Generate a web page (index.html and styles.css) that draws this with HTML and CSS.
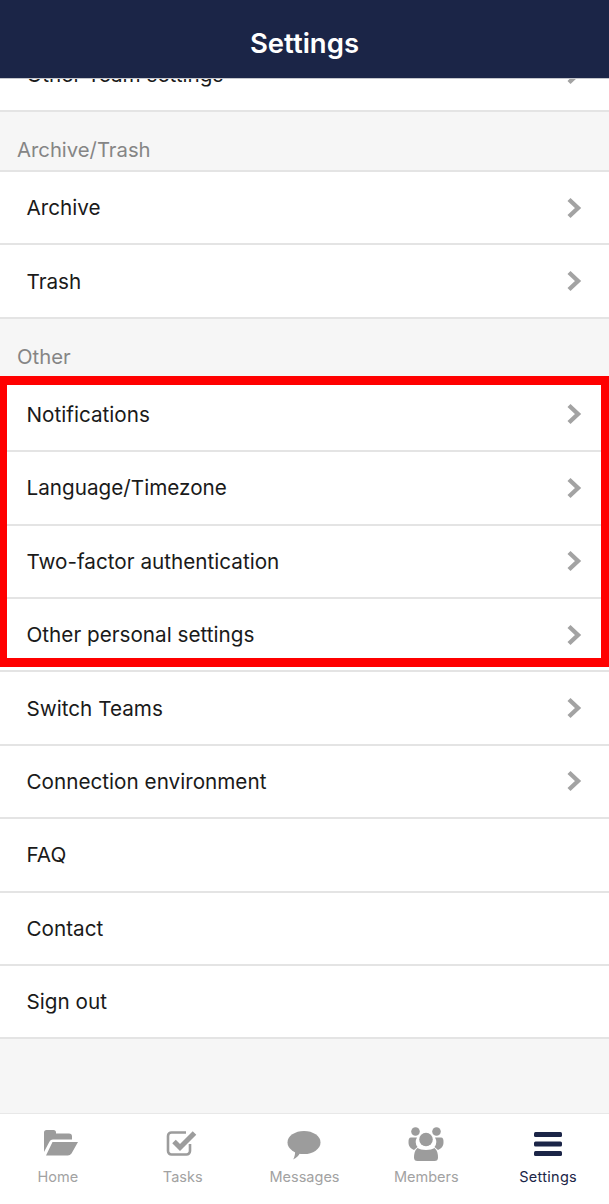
FILE: index.html
```html
<!DOCTYPE html>
<html lang="en">
<head>
  <meta charset="UTF-8" />
  <title>Settings</title>
  <link rel="stylesheet" href="styles.css">
</head>
<body>
  <div class="app">
    <header class="topbar">Settings</header>

    <main class="scroll">
      <div class="list list-cut">
        <div class="row"><span>Other Team settings</span><svg class="chev" viewBox="0 0 16 22"><path d="M3 2.5 L12 11 L3 19.5" /></svg></div>
      </div>

      <div class="group-title">Archive/Trash</div>
      <div class="list">
        <div class="row"><span>Archive</span><svg class="chev" viewBox="0 0 16 22"><path d="M3 2.5 L12 11 L3 19.5" /></svg></div>
        <div class="row"><span>Trash</span><svg class="chev" viewBox="0 0 16 22"><path d="M3 2.5 L12 11 L3 19.5" /></svg></div>
      </div>

      <div class="group-title">Other</div>
      <div class="list">
        <div class="row"><span>Notifications</span><svg class="chev" viewBox="0 0 16 22"><path d="M3 2.5 L12 11 L3 19.5" /></svg></div>
        <div class="row"><span>Language/Timezone</span><svg class="chev" viewBox="0 0 16 22"><path d="M3 2.5 L12 11 L3 19.5" /></svg></div>
        <div class="row"><span>Two-factor authentication</span><svg class="chev" viewBox="0 0 16 22"><path d="M3 2.5 L12 11 L3 19.5" /></svg></div>
        <div class="row"><span>Other personal settings</span><svg class="chev" viewBox="0 0 16 22"><path d="M3 2.5 L12 11 L3 19.5" /></svg></div>
        <div class="row"><span>Switch Teams</span><svg class="chev" viewBox="0 0 16 22"><path d="M3 2.5 L12 11 L3 19.5" /></svg></div>
        <div class="row"><span>Connection environment</span><svg class="chev" viewBox="0 0 16 22"><path d="M3 2.5 L12 11 L3 19.5" /></svg></div>
        <div class="row"><span>FAQ</span></div>
        <div class="row"><span>Contact</span></div>
        <div class="row"><span>Sign out</span></div>
      </div>
    </main>

    <nav class="tabs">
      <div class="tab tab-home">
        <svg class="tab-icon" viewBox="0 0 36 36">
          <path d="M1 5.5 a2.5 2.5 0 0 1 2.5-2.5 h7 a2.5 2.5 0 0 1 2.5 2.5 v1 h13 a3 3 0 0 1 3 3 v3 H10 a4 4 0 0 0-3.6 2.2 L1 25 Z" />
          <path d="M9.5 15 H35 L28.5 26.5 a4.5 4.5 0 0 1-3.8 2 H3 Z" />
        </svg>
        <span>Home</span>
      </div>
      <div class="tab">
        <svg class="tab-icon" viewBox="0 0 36 36">
          <path class="outline" d="M25 17 v7 a3.5 3.5 0 0 1-3.5 3.5 H6.5 A3.5 3.5 0 0 1 3 24 V9 a3.5 3.5 0 0 1 3.5-3.5 H21" />
          <path class="tick" d="M9 14.5 L15 20.5 L29.5 6" />
        </svg>
        <span>Tasks</span>
      </div>
      <div class="tab">
        <svg class="tab-icon" viewBox="0 0 36 36">
          <ellipse cx="18" cy="15.5" rx="16.5" ry="11.5" />
          <path d="M9 23 L14 26 Q12 30 7 32.5 Q9.5 29 9 23 Z" />
        </svg>
        <span>Messages</span>
      </div>
      <div class="tab">
        <svg class="tab-icon" viewBox="0 0 36 36">
          <circle cx="7.5" cy="4.5" r="4.3" />
          <circle cx="28.5" cy="4.5" r="4.3" />
          <path d="M3 10.5 h6 a8.5 8.5 0 0 0 0.5 9.5 l-3.5 3 C2 21 0.5 19 0.5 15 C0.5 12 1 10.5 3 10.5 Z" />
          <path d="M33 10.5 h-6 a8.5 8.5 0 0 1-0.5 9.5 l3.5 3 C34 21 35.5 19 35.5 15 C35.5 12 35 10.5 33 10.5 Z" />
          <circle cx="18" cy="12.5" r="6.8" />
          <path d="M9.5 21 C13 23.5 23 23.5 26.5 21 C29.5 23.5 30 27 30 30.5 a3.5 3.5 0 0 1-3.5 3.5 H9.5 A3.5 3.5 0 0 1 6 30.5 C6 27 6.5 23.5 9.5 21 Z" />
        </svg>
        <span>Members</span>
      </div>
      <div class="tab tab-active">
        <svg class="tab-icon" viewBox="0 0 36 36">
          <rect x="4" y="5" width="28" height="5" rx="1.5" />
          <rect x="4" y="14.5" width="28" height="5" rx="1.5" />
          <rect x="4" y="24" width="28" height="5" rx="1.5" />
        </svg>
        <span>Settings</span>
      </div>
    </nav>

    <div class="highlight"></div>
  </div>
</body>
</html>
```

FILE: styles.css
```css
* {
  box-sizing: border-box;
}

html, body {
  margin: 0;
  height: 100%;
}

body {
  font-family: Inter, "Liberation Sans", sans-serif;
  background: #f6f6f6;
  color: #1a1a1a;
  overflow: hidden;
}

.app {
  position: relative;
  height: 1204px;
  display: flex;
  flex-direction: column;
}

.topbar {
  height: 79px;
  flex: none;
  padding-top: 8px;
  display: flex;
  align-items: center;
  justify-content: center;
  background: #1b2547;
  border-bottom: 1px solid #c4c6cc;
  color: #fff;
  font-size: 27.5px;
  font-weight: 600;
  position: relative;
  z-index: 1;
}

.scroll {
  flex: 1;
  overflow: hidden;
}

.list {
  background: #fff;
}

.list-cut {
  margin-top: -40.4px;
}

.row {
  height: 73.4px;
  padding: 0 27px 0 26.5px;
  display: flex;
  align-items: center;
  justify-content: space-between;
  border-bottom: 2px solid #e4e4e4;
  font-size: 20.7px;
}

.chev {
  width: 16px;
  height: 22px;
  flex: none;
}

.chev path {
  fill: none;
  stroke: #a3a3a3;
  stroke-width: 4.4;
}

.group-title {
  height: 60px;
  padding: 25px 0 0 17px;
  border-bottom: 2px solid #e4e4e4;
  color: #858585;
  font-size: 20.3px;
  line-height: 26px;
}

.tabs {
  height: 91px;
  flex: none;
  display: flex;
  background: #fff;
  border-top: 1px solid #e8e8e8;
}

.tab {
  flex: 1;
  padding-top: 13px;
  display: flex;
  flex-direction: column;
  align-items: center;
  color: #a2a2a2;
  font-size: 14.5px;
  fill: #9c9c9c;
}

.tab-icon {
  width: 36px;
  height: 36px;
  margin-bottom: 5px;
}

.tab-icon .outline {
  fill: none;
  stroke: #9c9c9c;
  stroke-width: 2.6;
}

.tab-icon .tick {
  fill: none;
  stroke: #9c9c9c;
  stroke-width: 5;
}

.tab-home span {
  margin-right: 6px;
}

.tab-active {
  color: #1b2547;
  fill: #1b2547;
  letter-spacing: 0.3px;
}

.highlight {
  position: absolute;
  left: 0;
  right: 0;
  top: 376px;
  height: 291px;
  border-style: solid;
  border-color: #ff0000;
  border-width: 9px 8px 9px 7px;
  pointer-events: none;
}
```
